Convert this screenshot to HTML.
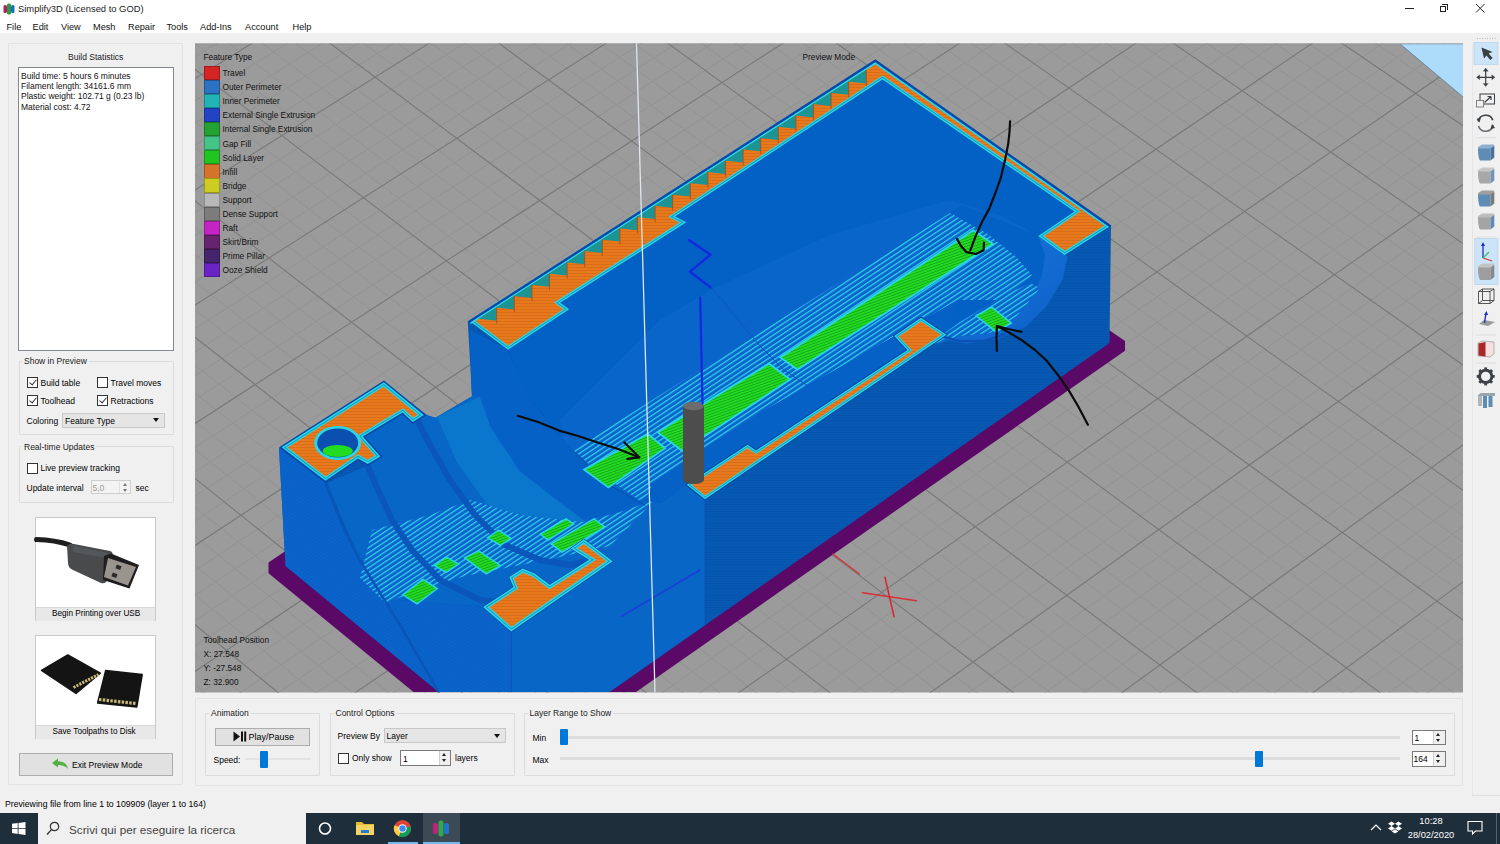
<!DOCTYPE html>
<html><head><meta charset="utf-8">
<style>
*{margin:0;padding:0;box-sizing:border-box}
html,body{width:1500px;height:844px;overflow:hidden;background:#f0f0f0;font-family:"Liberation Sans",sans-serif;color:#000}
.a{position:absolute;white-space:nowrap}
.t{font-size:8.5px;line-height:10px}
.grp{position:absolute;border:1px solid #dcdcdc;border-radius:1px}
.grpt{position:absolute;background:#f0f0f0;padding:0 2px;font-size:8.5px;line-height:10px;color:#222}
.cb{position:absolute;width:11px;height:11px;border:1px solid #333;background:#fff}
.cb.on::after{content:"";position:absolute;left:3px;top:0px;width:3px;height:6px;border:solid #333;border-width:0 1px 1px 0;transform:rotate(40deg)}
.btn{position:absolute;background:#e1e1e1;border:1px solid #adadad}
.spin{position:absolute;background:#fff;border:1px solid #7a7a7a}
.slh{position:absolute;background:#0078d7;border-radius:1px}
.trk{position:absolute;background:#dcdcdc;height:3px}
</style></head><body>
<!-- title bar -->
<div class="a" style="left:0;top:0;width:1500px;height:33px;background:#fff"></div>
<svg class="a" style="left:3px;top:3px" width="12" height="12" viewBox="0 0 12 12">
<rect x="0.5" y="2" width="3.5" height="8" rx="1.5" fill="#b01f6a"/><rect x="4" y="0.5" width="4" height="11" rx="1.5" fill="#2a9d3a"/><rect x="8" y="2" width="3.5" height="8" rx="1.5" fill="#1c6fc0"/>
</svg>
<div class="a" style="left:18px;top:3px;font-size:9.4px;line-height:12px;color:#222">Simplify3D (Licensed to GOD)</div>
<div class="a" style="left:1405px;top:8px;width:9px;height:1px;background:#222"></div>
<div class="a" style="left:1440px;top:6px;width:6px;height:6px;border:1px solid #222"></div>
<div class="a" style="left:1442px;top:4px;width:6px;height:6px;border-top:1px solid #222;border-right:1px solid #222"></div>
<svg class="a" style="left:1475px;top:3px" width="11" height="10"><path d="M1 1L9.5 9.5M9.5 1L1 9.5" stroke="#222" stroke-width="1"/></svg>
<!-- menu -->
<div class="a" style="left:0;top:21px;font-size:9.2px;line-height:12px;color:#111">
<span class="a" style="left:6.5px">File</span><span class="a" style="left:32.5px">Edit</span><span class="a" style="left:61px">View</span><span class="a" style="left:93px">Mesh</span><span class="a" style="left:128px">Repair</span><span class="a" style="left:166.5px">Tools</span><span class="a" style="left:200px">Add-Ins</span><span class="a" style="left:245px">Account</span><span class="a" style="left:292.5px">Help</span>
</div>

<!-- left panel -->
<div class="grp" style="left:8px;top:43px;width:175px;height:742px;border-color:#e3e3e3"></div>
<div class="a t" style="left:68px;top:52px;color:#222">Build Statistics</div>
<div class="a" style="left:18px;top:67px;width:156px;height:284px;background:#fff;border:1px solid #828790"></div>
<div class="a t" style="left:21px;top:71px;line-height:10.2px;color:#111">Build time: 5 hours 6 minutes<br>Filament length: 34161.6 mm<br>Plastic weight: 102.71 g (0.23 lb)<br>Material cost: 4.72</div>

<div class="grp" style="left:19px;top:361px;width:155px;height:74px"></div>
<div class="grpt" style="left:22px;top:356px">Show in Preview</div>
<div class="cb on" style="left:27px;top:377px"></div><div class="a t" style="left:40.5px;top:377.5px">Build table</div>
<div class="cb" style="left:97px;top:377px"></div><div class="a t" style="left:110.5px;top:377.5px">Travel moves</div>
<div class="cb on" style="left:27px;top:395px"></div><div class="a t" style="left:40.5px;top:395.5px">Toolhead</div>
<div class="cb on" style="left:97px;top:395px"></div><div class="a t" style="left:110.5px;top:395.5px">Retractions</div>
<div class="a t" style="left:26.5px;top:415.5px">Coloring</div>
<div class="btn" style="left:62px;top:412.5px;width:103px;height:15px;background:#e5e5e5;border-color:#c8c8c8"></div>
<div class="a t" style="left:65px;top:415.5px">Feature Type</div>
<div class="a" style="left:153px;top:418px;width:0;height:0;border-left:3.5px solid transparent;border-right:3.5px solid transparent;border-top:4px solid #111"></div>

<div class="grp" style="left:19px;top:446px;width:155px;height:57px"></div>
<div class="grpt" style="left:22px;top:441.5px">Real-time Updates</div>
<div class="cb" style="left:27px;top:462.5px"></div><div class="a t" style="left:40.5px;top:463px">Live preview tracking</div>
<div class="a t" style="left:26.5px;top:482.5px">Update interval</div>
<div class="spin" style="left:90.5px;top:480px;width:40px;height:14px;border-color:#cfcfcf;background:#f3f3f3"></div>
<div class="a t" style="left:92.5px;top:482.5px;color:#9a9a9a">5,0</div>
<div class="a" style="left:119px;top:481px;width:1px;height:12px;background:#e0e0e0"></div>
<div class="a" style="left:122.5px;top:483px;border-left:2.5px solid transparent;border-right:2.5px solid transparent;border-bottom:3px solid #777"></div>
<div class="a" style="left:122.5px;top:488.5px;border-left:2.5px solid transparent;border-right:2.5px solid transparent;border-top:3px solid #777"></div>
<div class="a t" style="left:135.5px;top:482.5px">sec</div>

<!-- USB button -->
<div class="a" style="left:35px;top:517px;width:121px;height:104px;background:#fff;border:1px solid #c9c9c9"></div>
<div class="a" style="left:36px;top:606.5px;width:119px;height:14px;background:#e8e8e8;border-top:1px solid #d8d8d8"></div>
<div class="a t" style="left:52px;top:609px;font-size:8.2px">Begin Printing over USB</div>
<svg class="a" style="left:0;top:0" width="160" height="745" viewBox="0 0 160 745">
<path d="M36.5 539.5Q55 540 70 545" stroke="#1e1e1e" stroke-width="5" fill="none" stroke-linecap="round"/>
<path d="M67 546Q69 543 74 544L110 551Q114 552 112 557L107 580Q106 584 101 583L73 570Q68 568 68 563Z" fill="#484a4c"/>
<path d="M74 546L108 553L107 558L73 552Z" fill="#5e6062" opacity="0.6"/>
<path d="M104 556L111 553.5L139 565L129.5 588.5L103 580Z" fill="#1e1e1e"/>
<path d="M108 558L136 567L128 585.5L104 577Z" fill="#9a948e"/>
<rect x="116" y="565" width="5" height="4" fill="#2a2a2a" transform="rotate(20 118 567)"/>
<rect x="112" y="573" width="5" height="4" fill="#2a2a2a" transform="rotate(20 114 575)"/>
</svg>

<!-- SD button -->
<div class="a" style="left:35px;top:635px;width:121px;height:104px;background:#fff;border:1px solid #c9c9c9"></div>
<div class="a" style="left:36px;top:724.5px;width:119px;height:14px;background:#e8e8e8;border-top:1px solid #d8d8d8"></div>
<div class="a t" style="left:52.5px;top:727px;font-size:8.2px">Save Toolpaths to Disk</div>
<svg class="a" style="left:0;top:0" width="160" height="745" viewBox="0 0 160 745">
<path d="M41.5 670.5L67.8 655L100.3 673.2L76 693.5Z" fill="#141414" stroke="#141414" stroke-width="1.5" stroke-linejoin="round"/>
<path d="M73.5 687.5L98.5 674.5" stroke="#c8b878" stroke-width="3" stroke-dasharray="2.2 1.1"/>
<path d="M105.7 670.5L142.2 674.6L136.8 707L97.6 703Z" fill="#141414" stroke="#141414" stroke-width="1.5" stroke-linejoin="round"/>
<path d="M99 699.5L136 703.5" stroke="#c8b878" stroke-width="3.2" stroke-dasharray="2.5 1.3"/>
</svg>

<!-- exit preview -->
<div class="btn" style="left:19px;top:753px;width:154px;height:23px;background:#e1e1e1;border-color:#adadad"></div>
<svg class="a" style="left:50px;top:757px" width="20" height="14" viewBox="0 0 20 14"><path d="M2 6L8 1.5V4.2C13 4.2 17 6.5 18 12C15.5 9 12.5 8 8 8V10.5Z" fill="#52b043"/></svg>
<div class="a t" style="left:72px;top:760px;font-size:8.5px">Exit Preview Mode</div>

<!-- viewport -->
<svg class="a" style="left:0;top:0" width="1500" height="844">
<defs><clipPath id="vp"><rect x="195" y="43.5" width="1268" height="649"/></clipPath></defs>
<g clip-path="url(#vp)">
<rect x="195" y="43" width="1268" height="650" fill="#9b9b9b"/>
<path d="M-1528.2 343.9L312.9 2095.5 M-1374.0 -112.9L426.7 -1070.0 M-1505.9 331.4L336.4 2076.8 M-1360.8 -101.3L440.5 -1061.2 M-1483.7 319.0L359.9 2058.1 M-1347.6 -89.7L454.4 -1052.4 M-1461.5 306.6L383.2 2039.6 M-1334.4 -78.0L468.3 -1043.6 M-1417.4 281.9L429.6 2002.7 M-1307.7 -54.6L496.2 -1025.9 M-1395.5 269.7L452.6 1984.3 M-1294.4 -42.8L510.2 -1017.1 M-1373.6 257.4L475.6 1966.1 M-1280.9 -31.0L524.2 -1008.2 M-1351.8 245.2L498.5 1947.9 M-1267.5 -19.1L538.3 -999.2 M-1308.4 221.0L544.0 1911.7 M-1240.4 4.7L566.6 -981.3 M-1286.8 208.9L566.6 1893.7 M-1226.8 16.7L580.8 -972.3 M-1265.3 196.9L589.1 1875.8 M-1213.2 28.7L595.0 -963.3 M-1243.8 184.9L611.5 1858.0 M-1199.5 40.7L609.3 -954.2 M-1201.1 161.0L656.1 1822.5 M-1172.1 64.9L637.9 -936.0 M-1179.9 149.2L678.3 1804.9 M-1158.2 77.1L652.3 -926.9 M-1158.7 137.3L700.4 1787.3 M-1144.4 89.2L666.8 -917.8 M-1137.6 125.5L722.4 1769.8 M-1130.5 101.5L681.2 -908.6 M-1095.6 102.0L766.1 1735.0 M-1102.6 126.1L710.3 -890.2 M-1074.7 90.3L787.9 1717.7 M-1088.6 138.4L724.9 -880.9 M-1053.8 78.7L809.5 1700.5 M-1074.5 150.8L739.5 -871.6 M-1033.1 67.1L831.1 1683.3 M-1060.4 163.2L754.2 -862.3 M-991.7 44.0L874.0 1649.2 M-1032.0 188.2L783.6 -843.7 M-971.1 32.4L895.3 1632.2 M-1017.8 200.8L798.4 -834.3 M-950.6 21.0L916.6 1615.3 M-1003.5 213.3L813.2 -824.9 M-930.2 9.5L937.8 1598.5 M-989.1 226.0L828.1 -815.4 M-889.5 -13.2L979.9 1565.0 M-960.3 251.4L858.0 -796.5 M-869.2 -24.5L1000.8 1548.3 M-945.8 264.1L873.0 -787.0 M-849.0 -35.8L1021.7 1531.7 M-931.3 276.9L888.0 -777.4 M-828.9 -47.1L1042.4 1515.2 M-916.7 289.7L903.1 -767.9 M-788.8 -69.5L1083.7 1482.4 M-887.4 315.5L933.4 -748.7 M-768.8 -80.6L1104.3 1466.0 M-872.7 328.5L948.6 -739.0 M-749.0 -91.8L1124.8 1449.7 M-857.9 341.5L963.8 -729.4 M-729.1 -102.8L1145.1 1433.5 M-843.1 354.6L979.1 -719.7 M-689.7 -124.9L1185.7 1401.3 M-813.3 380.8L1009.8 -700.2 M-670.0 -135.9L1205.9 1385.2 M-798.4 394.0L1025.3 -690.4 M-650.4 -146.8L1226.0 1369.3 M-783.4 407.2L1040.7 -680.6 M-630.9 -157.7L1246.0 1353.3 M-768.3 420.4L1056.2 -670.7 M-592.1 -179.5L1285.8 1321.7 M-738.0 447.1L1087.4 -651.0 M-572.7 -190.3L1305.6 1305.9 M-722.8 460.5L1103.0 -641.1 M-553.4 -201.1L1325.3 1290.2 M-707.5 473.9L1118.7 -631.1 M-534.2 -211.8L1344.9 1274.6 M-692.2 487.4L1134.5 -621.1 M-495.9 -233.2L1384.0 1243.5 M-661.4 514.5L1166.1 -601.1 M-476.9 -243.9L1403.5 1228.1 M-646.0 528.1L1181.9 -591.0 M-457.9 -254.5L1422.8 1212.7 M-630.5 541.8L1197.8 -580.9 M-439.0 -265.1L1442.1 1197.3 M-614.9 555.5L1213.8 -570.8 M-401.3 -286.1L1480.5 1166.8 M-583.6 583.1L1245.9 -550.5 M-382.5 -296.6L1499.6 1151.6 M-567.8 596.9L1262.0 -540.3 M-363.8 -307.1L1518.6 1136.5 M-552.1 610.8L1278.1 -530.0 M-345.1 -317.5L1537.6 1121.4 M-536.2 624.8L1294.3 -519.8 M-308.0 -338.3L1575.3 1091.4 M-504.4 652.8L1326.8 -499.1 M-289.5 -348.6L1594.0 1076.5 M-488.4 666.9L1343.2 -488.8 M-271.1 -358.9L1612.7 1061.6 M-472.3 681.0L1359.5 -478.4 M-252.7 -369.2L1631.3 1046.8 M-456.2 695.2L1376.0 -468.0 M-216.1 -389.6L1668.3 1017.4 M-423.8 723.8L1409.0 -447.0 M-197.9 -399.8L1686.8 1002.7 M-407.6 738.1L1425.5 -436.5 M-179.8 -410.0L1705.1 988.1 M-391.2 752.5L1442.2 -426.0 M-161.7 -420.1L1723.4 973.6 M-374.8 766.9L1458.8 -415.4 M-125.6 -440.2L1759.8 944.7 M-341.9 795.9L1492.3 -394.2 M-107.7 -450.3L1777.9 930.3 M-325.3 810.5L1509.1 -383.5 M-89.8 -460.3L1795.9 915.9 M-308.7 825.1L1526.0 -372.8 M-71.9 -470.2L1813.9 901.6 M-292.0 839.8L1542.9 -362.1 M-36.4 -490.1L1849.6 873.2 M-258.5 869.3L1576.9 -340.5 M-18.7 -500.0L1867.4 859.0 M-241.7 884.2L1594.0 -329.7 M-1.1 -509.8L1885.1 845.0 M-224.8 899.0L1611.1 -318.8 M16.5 -519.7L1902.8 830.9 M-207.8 914.0L1628.3 -307.9 M51.5 -539.2L1937.9 803.0 M-173.7 944.0L1662.8 -286.1 M68.9 -549.0L1955.4 789.1 M-156.5 959.1L1680.1 -275.1 M86.3 -558.7L1972.8 775.2 M-139.3 974.3L1697.5 -264.1 M103.6 -568.4L1990.2 761.4 M-122.1 989.5L1714.9 -253.0 M138.1 -587.7L2024.7 733.9 M-87.3 1020.1L1749.9 -230.8 M155.3 -597.3L2041.9 720.3 M-69.9 1035.4L1767.5 -219.6 M172.4 -606.9L2059.0 706.6 M-52.4 1050.9L1785.2 -208.4 M189.5 -616.4L2076.1 693.1 M-34.8 1066.3L1802.9 -197.2 M223.5 -635.4L2110.0 666.1 M0.6 1097.5L1838.4 -174.7 M240.5 -644.9L2126.9 652.6 M18.3 1113.1L1856.3 -163.3 M257.4 -654.3L2143.8 639.3 M36.2 1128.8L1874.2 -152.0 M274.2 -663.7L2160.5 625.9 M54.1 1144.6L1892.2 -140.6 M307.7 -682.5L2193.9 599.4 M90.1 1176.3L1928.3 -117.7 M324.4 -691.8L2210.5 586.2 M108.1 1192.2L1946.4 -106.2 M341.1 -701.1L2227.1 573.0 M126.3 1208.2L1964.6 -94.7 M357.7 -710.4L2243.6 559.9 M144.5 1224.2L1982.8 -83.1 M390.7 -728.9L2276.4 533.8 M181.2 1256.5L2019.5 -59.8 M407.2 -738.1L2292.7 520.8 M199.6 1272.7L2037.9 -48.2 M423.6 -747.3L2309.0 507.8 M218.1 1289.0L2056.4 -36.5 M440.0 -756.4L2325.2 494.9 M236.6 1305.3L2074.9 -24.7 M472.6 -774.6L2357.5 469.2 M274.0 1338.2L2112.1 -1.1 M488.8 -783.7L2373.6 456.5 M292.7 1354.7L2130.8 10.8 M505.0 -792.8L2389.6 443.7 M311.6 1371.3L2149.6 22.7 M521.1 -801.8L2405.5 431.0 M330.5 1388.0L2168.4 34.6 M553.3 -819.7L2437.3 405.8 M368.5 1421.4L2206.2 58.6 M569.3 -828.7L2453.1 393.2 M387.6 1438.3L2225.2 70.6 M585.2 -837.6L2468.8 380.7 M406.8 1455.2L2244.3 82.7 M601.1 -846.5L2484.5 368.2 M426.1 1472.1L2263.4 94.8 M632.8 -864.2L2515.8 343.4 M464.8 1506.2L2301.8 119.2 M648.6 -873.1L2531.3 331.0 M484.3 1523.4L2321.1 131.4 M664.4 -881.9L2546.8 318.7 M503.8 1540.6L2340.5 143.7 M680.1 -890.6L2562.3 306.4 M523.4 1557.9L2359.9 156.0 M711.3 -908.1L2593.0 281.9 M562.9 1592.6L2398.9 180.8 M726.9 -916.8L2608.3 269.8 M582.8 1610.1L2418.5 193.2 M742.4 -925.5L2623.5 257.7 M602.7 1627.7L2438.2 205.7 M757.9 -934.2L2638.7 245.6 M622.7 1645.3L2457.9 218.2 M788.8 -951.4L2669.0 221.5 M662.9 1680.7L2497.6 243.4 M804.1 -960.0L2684.0 209.5 M683.1 1698.5L2517.5 256.0 M819.4 -968.5L2699.0 197.6 M703.4 1716.4L2537.5 268.7 M834.7 -977.1L2714.0 185.7 M723.8 1734.3L2557.5 281.4 M865.1 -994.1L2743.7 162.0 M764.8 1770.5L2597.8 306.9 M880.3 -1002.6L2758.6 150.3 M785.5 1788.6L2618.1 319.8 M895.4 -1011.0L2773.3 138.5 M806.2 1806.8L2638.4 332.7 M910.5 -1019.4L2788.0 126.8 M826.9 1825.1L2658.8 345.6 M940.5 -1036.2L2817.3 103.5 M868.7 1862.0L2699.7 371.6 M955.4 -1044.6L2831.9 91.9 M889.8 1880.5L2720.3 384.6 M970.4 -1052.9L2846.4 80.3 M910.9 1899.1L2740.9 397.7 M985.2 -1061.2L2860.9 68.8 M932.1 1917.7L2761.7 410.8" stroke="#909090" stroke-width="0.8" fill="none"/>
<path d="M-1550.6 356.4L289.3 2114.2 M-1387.1 -124.5L412.9 -1078.7 M-1439.4 294.2L406.4 2021.1 M-1321.1 -66.3L482.2 -1034.8 M-1330.1 233.1L521.3 1929.7 M-1254.0 -7.2L552.4 -990.3 M-1222.5 172.9L633.9 1840.2 M-1185.8 52.8L623.6 -945.1 M-1116.6 113.8L744.3 1752.4 M-1116.6 113.8L695.7 -899.4 M-1012.4 55.5L852.6 1666.2 M-1046.2 175.7L768.9 -853.0 M-909.8 -1.9L958.9 1581.7 M-974.7 238.6L843.0 -806.0 M-808.8 -58.3L1063.1 1498.8 M-902.1 302.6L918.2 -758.3 M-709.4 -113.9L1165.5 1417.4 M-828.2 367.6L994.5 -709.9 M-611.5 -168.6L1265.9 1337.5 M-753.2 433.7L1071.8 -660.9 M-515.1 -222.5L1364.5 1259.0 M-676.9 500.9L1150.2 -611.1 M-420.1 -275.6L1461.4 1182.0 M-599.3 569.3L1229.8 -560.7 M-326.6 -327.9L1556.5 1106.4 M-520.3 638.8L1310.5 -509.5 M-234.4 -379.4L1649.9 1032.1 M-440.1 709.5L1392.4 -457.5 M-143.6 -430.2L1741.6 959.1 M-358.4 781.4L1475.6 -404.8 M-54.1 -480.2L1831.8 887.4 M-275.3 854.5L1559.9 -351.3 M34.0 -529.5L1920.4 816.9 M-190.8 929.0L1645.5 -297.0 M120.9 -578.0L2007.5 747.6 M-104.7 1004.8L1732.4 -241.9 M206.6 -625.9L2093.1 679.6 M-17.1 1081.9L1820.6 -186.0 M291.0 -673.1L2177.3 612.6 M72.0 1160.4L1910.2 -129.2 M374.2 -719.7L2260.0 546.8 M162.8 1240.3L2001.1 -71.5 M456.3 -765.5L2341.4 482.1 M255.3 1321.7L2093.5 -12.9 M537.2 -810.8L2421.4 418.4 M349.4 1404.7L2187.3 46.6 M617.0 -855.4L2500.2 355.8 M445.4 1489.2L2282.6 107.0 M695.7 -899.4L2577.6 294.1 M543.1 1575.2L2379.4 168.4 M773.4 -942.8L2653.9 233.5 M642.8 1663.0L2477.7 230.8 M850.0 -985.6L2728.9 173.9 M744.3 1752.4L2577.6 294.1 M925.5 -1027.8L2802.7 115.1 M847.8 1843.5L2679.2 358.6" stroke="#787878" stroke-width="1.1" fill="none"/>
<polygon points="1400,43.5 1463,43.5 1463,96.5" fill="#addcfa"/>
<path d="M1400 44L1463 97" stroke="#6a8aa0" stroke-width="1"/>
<line x1="195" y1="43.8" x2="1463" y2="43.8" stroke="#8a8f94" stroke-width="1"/>
<defs>
<pattern id="st" patternUnits="userSpaceOnUse" width="40" height="4.2" patternTransform="rotate(-33.5)">
<rect width="40" height="4.2" fill="#0e63cc"/><rect y="0" width="40" height="1.3" fill="#2ad0e6"/></pattern>
<pattern id="st2" patternUnits="userSpaceOnUse" width="40" height="3.4" patternTransform="rotate(-33.5)">
<rect width="40" height="3.4" fill="#0f66cf"/><rect y="0" width="40" height="1.0" fill="#24b8e0"/></pattern>
<pattern id="gs" patternUnits="userSpaceOnUse" width="40" height="2.6" patternTransform="rotate(-20)">
<rect width="40" height="2.6" fill="#22dc22"/><rect y="0" width="40" height="0.6" fill="#128a18"/></pattern>
<pattern id="lf" patternUnits="userSpaceOnUse" width="40" height="3" patternTransform="rotate(-33.5)">
<rect width="40" height="3" fill="#0964cc"/><rect y="0" width="40" height="0.8" fill="#0a5cc0"/></pattern>
<pattern id="fs" patternUnits="userSpaceOnUse" width="40" height="2.4">
<rect width="40" height="2.4" fill="#0759b4"/><rect y="0" width="40" height="0.8" fill="#0553aa"/></pattern>
<pattern id="orp" patternUnits="userSpaceOnUse" width="6" height="3">
<rect width="6" height="3" fill="#e8781c"/><rect y="0" width="6" height="0.6" fill="#d06818"/></pattern>
<linearGradient id="endw" x1="0" y1="0" x2="1" y2="1"><stop offset="0" stop-color="#1a78dc"/><stop offset="1" stop-color="#0d5fc8"/></linearGradient>
</defs>
<polygon points="284.0,552.0 268.5,562.5 268.5,573.3 413.5,692.0 636.0,692.0 1125.0,350.7 1125.0,341.0 1109.0,330.0" fill="#5a0a66" />
<polygon points="285.6,566.0 284.7,552.0 279.0,448.0 384.1,381.3 427.2,415.3 435.5,417.7 472.0,396.2 467.8,321.6 875.3,59.7 1111.0,225.5 1109.5,343.0 609.4,692.0 438.7,692.0" fill="url(#fs)" />
<polygon points="284.7,552.0 279.0,448.0 325.4,482.7 340.0,520.0 359.6,560.0 400.0,600.0 482.1,606.8 511.3,632.4 511.3,692.0 438.7,692.0 285.6,566.0" fill="url(#lf)" />
<polygon points="327.0,483.0 367.7,465.6 382.7,456.8 365.0,437.0 402.4,414.5 412.6,424.0 426.3,415.2 435.5,417.7 472.0,396.2 470.0,330.0 508.0,349.7 529.6,398.0 568.0,445.4 597.7,472.0 639.0,500.0 661.0,503.0 685.0,485.0 705.0,500.4 705.0,625.0 609.4,692.0 511.3,692.0 511.3,632.4 482.1,606.8 400.0,600.0 359.6,560.0" fill="#0766c6" />
<polygon points="472.0,396.2 470.0,330.0 508.0,349.7 533.7,402.5 559.3,433.8 599.0,479.3 644.7,505.0 615.0,525.0 582.0,519.0 559.3,502.0 519.5,470.8 491.0,428.0 479.7,396.8" fill="#0661c6" />
<polygon points="437.0,416.7 456.9,462.3 485.3,502.0 508.0,524.8 540.0,545.0 600.0,540.0 582.0,519.0 559.3,502.0 519.5,470.8 491.0,428.0 479.7,396.8" fill="#0a76cc" />
<polygon points="360.0,578.0 372.0,530.0 430.0,515.0 471.0,500.0 520.0,515.0 582.0,522.0 620.0,512.0 655.0,500.0 610.0,546.0 551.0,559.0 465.0,576.0 420.0,590.0 385.0,603.0" fill="url(#st)" />
<polyline points="325.4,483.0 340.0,520.0 359.6,560.0 400.0,625.0 438.7,692.0" fill="none" stroke="#0a55b8" stroke-width="2.5" stroke-linejoin="round" stroke-linecap="round" />
<polyline points="367.7,466.0 378.0,490.0 392.0,520.0 412.0,550.0 440.0,580.0 480.0,600.0 520.0,605.0 545.0,600.0" fill="none" stroke="#0b56ba" stroke-width="6" stroke-linejoin="round" stroke-linecap="round" />
<polyline points="416.5,419.0 430.0,445.0 450.0,480.0 475.0,515.0 505.0,545.0 540.0,560.0 570.0,565.0 600.0,558.0" fill="none" stroke="#0b56ba" stroke-width="6" stroke-linejoin="round" stroke-linecap="round" />
<polyline points="508.0,350.0 533.7,402.5 559.3,433.8 599.0,479.3 644.7,505.0" fill="none" stroke="#0852b0" stroke-width="1.2" stroke-linejoin="round" stroke-linecap="round" />
<polygon points="401.5,594.8 417.0,604.8 438.5,588.6 423.0,578.6" fill="#2ad6e6" />
<polygon points="403.9,594.7 416.9,603.1 436.1,588.7 423.1,580.3 403.9,594.7" fill="url(#gs)" />
<polygon points="433.1,565.5 446.2,573.2 460.0,564.0 446.2,556.3" fill="#2ad6e6" />
<polygon points="435.7,565.4 446.2,571.5 457.3,564.1 446.3,558.0 435.7,565.4" fill="url(#gs)" />
<polygon points="463.2,557.8 486.3,574.7 501.7,565.5 478.6,550.0" fill="#2ad6e6" />
<polygon points="465.9,558.0 486.4,573.0 499.1,565.4 478.5,551.6 465.9,558.0" fill="url(#gs)" />
<polygon points="486.3,537.8 500.2,546.2 512.5,538.5 498.6,529.3" fill="#2ad6e6" />
<polygon points="488.9,537.7 500.2,544.6 509.9,538.5 498.6,531.0 488.9,537.7" fill="url(#gs)" />
<polygon points="539.0,534.0 548.0,541.0 575.0,524.0 566.0,518.0" fill="#2ad6e6" />
<polygon points="541.5,534.2 548.1,539.3 572.4,524.0 566.0,519.7 541.5,534.2" fill="url(#gs)" />
<polygon points="550.0,544.0 562.0,553.0 606.0,527.0 594.0,518.0" fill="#2ad6e6" />
<polygon points="552.5,544.1 562.1,551.3 603.5,526.9 593.9,519.7 552.5,544.1" fill="url(#gs)" />
<polygon points="508.0,349.7 569.2,309.3 560.1,302.8 686.4,222.2 675.0,216.5 882.5,79.5 1074.5,211.5 1038.3,236.0 1064.5,254.9 1067.7,256.0 1062.5,279.5 1046.9,305.5 1026.0,326.4 997.4,339.4 966.0,343.5 948.2,334.8 920.9,316.6 892.7,335.7 906.0,349.8 756.0,449.2 747.6,443.5 685.0,485.0 661.0,503.0 639.0,500.0 597.7,472.0 568.0,445.4 529.6,398.0" fill="#0360c4" />
<clipPath id="tubclip"><polygon points="508.0,349.7 569.2,309.3 560.1,302.8 686.4,222.2 675.0,216.5 882.5,79.5 1074.5,211.5 1038.3,236.0 1064.5,254.9 1067.7,256.0 1062.5,279.5 1046.9,305.5 1026.0,326.4 997.4,339.4 966.0,343.5 948.2,334.8 920.9,316.6 892.7,335.7 906.0,349.8 756.0,449.2 747.6,443.5 685.0,485.0 661.0,503.0 639.0,500.0 597.7,472.0 568.0,445.4 529.6,398.0"/></clipPath>
<g clip-path="url(#tubclip)">
<polygon points="714.7,288.0 830.0,235.0 949.3,200.0 1000.0,215.0 1038.0,236.0 962.0,205.0 566.0,455.0 560.0,420.0 600.0,380.0 660.0,320.0" fill="#1a70d8" opacity="0.3"/>
<polygon points="560.0,457.9 950.0,213.0 987.0,233.6 1015.5,256.3 1032.0,275.0 1005.0,300.0 958.0,300.1 760.0,413.0 660.0,478.0 640.0,505.0 560.0,470.0" fill="url(#st)" />
<polygon points="661.0,503.0 650.0,485.7 760.0,413.0 958.0,300.1 948.2,334.8 920.9,316.6 892.7,335.7 906.0,349.8 756.0,449.2 747.6,443.5 685.0,485.0" fill="#0561c6" />
</g>
<polyline points="704.0,280.0 718.0,295.0 730.0,310.0 745.0,328.0 760.0,346.0 772.0,358.0 784.0,370.0 808.0,386.0" fill="none" stroke="#0a58bc" stroke-width="1.0" stroke-linejoin="round" stroke-linecap="round" />
<polygon points="582.4,469.6 608.4,488.6 666.5,448.3 647.8,432.8" fill="#2ad6e6" />
<polygon points="585.7,469.8 608.4,486.4 663.5,448.2 647.6,435.0 585.7,469.8" fill="url(#gs)" />
<polygon points="656.0,432.0 682.2,452.0 791.7,379.6 769.0,362.5" fill="#2ad6e6" />
<polygon points="659.2,432.2 682.3,449.8 788.6,379.5 768.9,364.7 659.2,432.2" fill="url(#gs)" />
<polygon points="778.7,357.3 797.3,370.7 994.7,244.0 973.3,229.3" fill="#2ad6e6" />
<polygon points="781.9,357.4 797.4,368.5 991.4,243.9 973.3,231.5 781.9,357.4" fill="url(#gs)" />
<polygon points="1038.3,236.0 1064.5,254.9 1067.7,256.0 1062.5,279.5 1046.9,305.5 1026.0,326.4 997.4,339.4 966.0,343.5 945.0,339.4 935.0,345.0 960.0,336.0 990.0,333.0 1015.0,318.0 1032.0,298.0 1042.0,275.0 1045.0,255.0" fill="url(#endw)" />
<polygon points="925.0,347.0 960.0,322.0 1000.0,298.0 1030.0,283.0 1040.0,288.0 1032.0,298.0 1015.0,318.0 990.0,333.0 960.0,336.0 940.0,342.0" fill="url(#st)" />
<polygon points="974.8,315.6 995.6,332.7 1012.7,323.2 991.8,306.2" fill="#2ad6e6" />
<polygon points="977.6,315.9 995.8,330.8 1009.9,322.9 991.6,308.1 977.6,315.9" fill="url(#gs)" />
<polyline points="940.0,336.0 960.0,341.0 985.0,341.0 1005.0,334.0" fill="none" stroke="#0a54b8" stroke-width="2.5" stroke-linejoin="round" stroke-linecap="round" />
<polygon points="468.9,320.5 875.3,59.7 1111.0,225.5 1064.5,254.9 1038.3,236.0 1074.5,211.5 882.5,79.5 675.0,216.5 686.4,222.2 560.1,302.8 569.2,309.3 508.0,349.7" fill="#2ad6e6" />
<polygon points="471.4,320.6 508.0,348.0 566.7,309.3 557.6,302.7 683.6,222.3 672.2,216.7 882.5,77.8 1077.0,211.5 1040.7,236.0 1064.6,253.2 1108.5,225.4 875.3,61.4 471.4,320.6" fill="#1590b8" />
<polygon points="472.8,320.6 508.1,347.0 565.3,309.2 556.2,302.7 681.9,222.4 670.6,216.8 882.5,76.8 1078.4,211.5 1042.1,236.1 1064.6,252.2 1107.0,225.4 875.2,62.4 472.8,320.6" fill="#2ad6e6" />
<polygon points="474.9,320.7 508.1,345.5 563.2,309.2 554.0,302.6 679.5,222.6 668.2,216.9 882.5,75.4 1080.5,211.5 1044.2,236.1 1064.6,250.8 1104.9,225.3 875.2,63.8 474.9,320.7" fill="url(#orp)" />
<polyline points="469.5,321.6 875.3,60.8 1110.0,226.0" fill="none" stroke="#0848a8" stroke-width="2.4" stroke-linejoin="round" stroke-linecap="round" stroke-linecap="butt"/>
<polyline points="471.0,323.2 875.3,63.3 1107.5,227.0" fill="none" stroke="#2ad6e6" stroke-width="1.5" stroke-linejoin="round" stroke-linecap="round" stroke-linecap="butt"/>
<clipPath id="rimclip"><polygon points="475.0,320.7 508.1,345.4 563.0,309.2 553.8,302.6 679.3,222.6 668.0,216.9 882.5,75.3 1080.7,211.5 1044.4,236.1 1064.6,250.7 1104.7,225.3 875.2,63.9 475.0,320.7"/></clipPath><g clip-path="url(#rimclip)"><polygon points="478.0,318.7 496.7,306.7 496.7,320.7" fill="#1d9494"/>
<line x1="496.7" y1="306.7" x2="496.7" y2="323.7" stroke="#a84a10" stroke-width="0.8"/>
<polygon points="495.6,307.4 514.3,295.4 514.3,309.4" fill="#1d9494"/>
<line x1="514.3" y1="295.4" x2="514.3" y2="312.4" stroke="#a84a10" stroke-width="0.8"/>
<polygon points="513.2,296.1 531.9,284.1 531.9,298.1" fill="#1d9494"/>
<line x1="531.9" y1="284.1" x2="531.9" y2="301.1" stroke="#a84a10" stroke-width="0.8"/>
<polygon points="530.8,284.8 549.5,272.8 549.5,286.8" fill="#1d9494"/>
<line x1="549.5" y1="272.8" x2="549.5" y2="289.8" stroke="#a84a10" stroke-width="0.8"/>
<polygon points="548.4,273.5 567.1,261.5 567.1,275.5" fill="#1d9494"/>
<line x1="567.1" y1="261.5" x2="567.1" y2="278.5" stroke="#a84a10" stroke-width="0.8"/>
<polygon points="566.0,262.2 584.7,250.2 584.7,264.2" fill="#1d9494"/>
<line x1="584.7" y1="250.2" x2="584.7" y2="267.2" stroke="#a84a10" stroke-width="0.8"/>
<polygon points="583.6,250.9 602.3,238.9 602.3,252.9" fill="#1d9494"/>
<line x1="602.3" y1="238.9" x2="602.3" y2="255.9" stroke="#a84a10" stroke-width="0.8"/>
<polygon points="601.2,239.6 619.9,227.6 619.9,241.6" fill="#1d9494"/>
<line x1="619.9" y1="227.6" x2="619.9" y2="244.6" stroke="#a84a10" stroke-width="0.8"/>
<polygon points="618.8,228.3 637.5,216.3 637.5,230.3" fill="#1d9494"/>
<line x1="637.5" y1="216.3" x2="637.5" y2="233.3" stroke="#a84a10" stroke-width="0.8"/>
<polygon points="636.4,217.0 655.1,205.0 655.1,219.0" fill="#1d9494"/>
<line x1="655.1" y1="205.0" x2="655.1" y2="222.0" stroke="#a84a10" stroke-width="0.8"/>
<polygon points="654.0,205.7 672.7,193.7 672.7,207.7" fill="#1d9494"/>
<line x1="672.7" y1="193.7" x2="672.7" y2="210.7" stroke="#a84a10" stroke-width="0.8"/>
<polygon points="671.6,194.4 690.3,182.4 690.3,196.4" fill="#1d9494"/>
<line x1="690.3" y1="182.4" x2="690.3" y2="199.4" stroke="#a84a10" stroke-width="0.8"/>
<polygon points="689.2,183.1 707.9,171.1 707.9,185.1" fill="#1d9494"/>
<line x1="707.9" y1="171.1" x2="707.9" y2="188.1" stroke="#a84a10" stroke-width="0.8"/>
<polygon points="706.8,171.9 725.5,159.8 725.5,173.9" fill="#1d9494"/>
<line x1="725.5" y1="159.8" x2="725.5" y2="176.8" stroke="#a84a10" stroke-width="0.8"/>
<polygon points="724.4,160.6 743.1,148.5 743.1,162.6" fill="#1d9494"/>
<line x1="743.1" y1="148.5" x2="743.1" y2="165.5" stroke="#a84a10" stroke-width="0.8"/>
<polygon points="742.0,149.3 760.7,137.2 760.7,151.3" fill="#1d9494"/>
<line x1="760.7" y1="137.2" x2="760.7" y2="154.2" stroke="#a84a10" stroke-width="0.8"/>
<polygon points="759.6,138.0 778.3,126.0 778.3,140.0" fill="#1d9494"/>
<line x1="778.3" y1="126.0" x2="778.3" y2="143.0" stroke="#a84a10" stroke-width="0.8"/>
<polygon points="777.2,126.7 795.9,114.7 795.9,128.7" fill="#1d9494"/>
<line x1="795.9" y1="114.7" x2="795.9" y2="131.7" stroke="#a84a10" stroke-width="0.8"/>
<polygon points="794.8,115.4 813.5,103.4 813.5,117.4" fill="#1d9494"/>
<line x1="813.5" y1="103.4" x2="813.5" y2="120.4" stroke="#a84a10" stroke-width="0.8"/>
<polygon points="812.4,104.1 831.1,92.1 831.1,106.1" fill="#1d9494"/>
<line x1="831.1" y1="92.1" x2="831.1" y2="109.1" stroke="#a84a10" stroke-width="0.8"/>
<polygon points="830.0,92.8 848.7,80.8 848.7,94.8" fill="#1d9494"/>
<line x1="848.7" y1="80.8" x2="848.7" y2="97.8" stroke="#a84a10" stroke-width="0.8"/>
<polygon points="847.6,81.5 866.3,69.5 866.3,83.5" fill="#1d9494"/>
<line x1="866.3" y1="69.5" x2="866.3" y2="86.5" stroke="#a84a10" stroke-width="0.8"/></g>
<polygon points="384.0,380.5 279.1,447.2 325.4,482.7 358.1,460.2 367.7,465.6 382.7,456.8 365.0,437.0 402.4,414.5 412.6,424.0 426.3,415.2" fill="#0848a8" />
<polygon points="383.9,382.3 281.7,447.3 325.4,480.8 358.0,458.4 367.7,463.9 380.4,456.4 362.7,436.6 402.6,412.6 412.8,422.1 423.8,415.1 383.9,382.3" fill="#2ad6e6" />
<polygon points="383.8,384.2 284.3,447.4 325.5,479.0 357.9,456.7 367.7,462.1 378.0,456.1 360.3,436.3 402.8,410.8 412.9,420.2 421.2,414.9 383.8,384.2" fill="#1590b8" />
<polygon points="383.7,385.2 285.7,447.5 325.5,478.0 357.9,455.7 367.7,461.2 376.8,455.9 359.1,436.1 402.9,409.8 413.0,419.2 419.9,414.8 383.7,385.2" fill="#2ad6e6" />
<polygon points="383.6,386.7 287.8,447.6 325.6,476.5 357.8,454.3 367.6,459.8 374.9,455.6 357.2,435.8 403.1,408.3 413.2,417.7 417.8,414.7 383.6,386.7" fill="url(#orp)" />
<ellipse cx="337.7" cy="443" rx="23.5" ry="17" fill="#2ad6e6"/><ellipse cx="337.7" cy="443" rx="20.5" ry="14.5" fill="#0b4fb0"/><ellipse cx="337.7" cy="451" rx="15" ry="6" fill="#22dc22"/>
<polygon points="482.1,606.8 512.7,586.9 508.4,576.9 522.6,567.7 535.4,573.3 549.7,584.0 588.0,559.8 569.6,548.4 583.8,538.5 613.7,561.3 511.3,632.4" fill="#0848a8" />
<polygon points="483.1,606.9 511.3,631.6 612.7,561.3 583.8,539.2 570.7,548.4 589.1,559.8 549.7,584.7 535.1,573.8 522.7,568.4 509.2,577.1 513.5,587.1 483.1,606.9" fill="#2ad6e6" />
<polygon points="485.7,607.1 511.5,629.6 610.0,561.2 583.7,541.2 573.6,548.3 592.1,559.8 549.6,586.7 534.3,575.2 522.8,570.2 511.2,577.7 515.5,587.7 485.7,607.1" fill="#1590b8" />
<polygon points="487.1,607.2 511.5,628.6 608.6,561.2 583.7,542.2 575.1,548.3 593.7,559.8 549.6,587.6 533.9,575.9 522.9,571.1 512.2,578.0 516.5,588.0 487.1,607.2" fill="#2ad6e6" />
<polygon points="489.4,607.3 511.6,626.8 606.2,561.1 583.7,543.9 577.6,548.2 596.3,559.8 549.5,589.3 533.2,577.1 523.0,572.7 513.9,578.6 518.2,588.6 489.4,607.3" fill="url(#orp)" />
<polygon points="685.1,484.7 747.6,443.5 756.0,449.2 906.0,349.8 892.7,335.7 920.9,316.6 948.2,334.8 705.0,500.4" fill="#0848a8" />
<polygon points="686.8,484.8 705.0,499.2 946.4,334.8 920.9,317.8 894.2,335.9 907.5,350.0 756.0,450.4 747.6,444.7 686.8,484.8" fill="#2ad6e6" />
<polygon points="689.0,484.9 705.1,497.5 944.1,334.8 920.9,319.4 896.2,336.1 909.5,350.2 756.0,452.0 747.6,446.3 689.0,484.9" fill="#1590b8" />
<polygon points="690.2,484.9 705.1,496.7 942.8,334.8 920.9,320.2 897.3,336.2 910.6,350.3 756.0,452.8 747.6,447.1 690.2,484.9" fill="#2ad6e6" />
<polygon points="691.9,485.0 705.2,495.4 941.0,334.8 920.9,321.4 898.8,336.4 912.2,350.5 756.0,454.0 747.6,448.3 691.9,485.0" fill="url(#orp)" />
<polyline points="511.3,633.0 511.3,692.0" fill="none" stroke="#0a52b4" stroke-width="0.8" stroke-linejoin="round" stroke-linecap="round" />
<polyline points="705.0,501.0 705.0,625.0" fill="none" stroke="#0a52b4" stroke-width="0.8" stroke-linejoin="round" stroke-linecap="round" />
<rect x="683" y="406" width="21" height="74.5" fill="#4d4d4d"/><ellipse cx="693.5" cy="480" rx="10.5" ry="4" fill="#4d4d4d"/><ellipse cx="693.5" cy="406" rx="10.5" ry="4.2" fill="#6c6c6c"/>
<polyline points="700.2,297.6 702.5,403.4" fill="none" stroke="#1428e0" stroke-width="2.2" stroke-linejoin="round" stroke-linecap="round" />
<polyline points="689.0,240.1 710.4,254.8 690.1,271.7 710.4,287.4" fill="none" stroke="#1428e0" stroke-width="2.4" stroke-linejoin="round" stroke-linecap="round" />
<polyline points="622.0,616.0 700.0,570.0" fill="none" stroke="#1a40d8" stroke-width="2" stroke-linejoin="round" stroke-linecap="round" />
<polyline points="636.5,43.0 655.0,692.0" fill="none" stroke="#dfe6ee" stroke-width="1.3" stroke-linejoin="round" stroke-linecap="round" />
<polyline points="832.8,553.9 859.4,574.1" fill="none" stroke="#d8303a" stroke-width="1.3" stroke-linejoin="round" stroke-linecap="round" />
<polyline points="862.6,592.8 916.5,600.8" fill="none" stroke="#d8303a" stroke-width="1.5" stroke-linejoin="round" stroke-linecap="round" />
<polyline points="885.0,577.3 894.1,616.8" fill="none" stroke="#e02030" stroke-width="1.5" stroke-linejoin="round" stroke-linecap="round" />
<polyline points="1010.1,121.4 1009.5,132.0 1008.2,144.0 1005.0,160.0 1000.7,178.2 995.0,194.0 989.3,208.6 982.0,222.0 976.0,235.1 970.3,250.3" fill="none" stroke="#0c0c0c" stroke-width="2.2" stroke-linejoin="round" stroke-linecap="round" />
<polyline points="957.0,238.9 961.0,246.0 966.5,252.2 976.0,254.0 983.6,250.3 984.0,242.7" fill="none" stroke="#0c0c0c" stroke-width="2.2" stroke-linejoin="round" stroke-linecap="round" />
<polyline points="517.8,415.8 538.0,422.0 559.2,430.6 578.0,436.0 597.7,442.5 618.0,449.0 639.2,457.3" fill="none" stroke="#0c0c0c" stroke-width="2.2" stroke-linejoin="round" stroke-linecap="round" />
<polyline points="624.4,442.5 632.0,450.0 639.2,457.3 627.3,458.8" fill="none" stroke="#0c0c0c" stroke-width="2.2" stroke-linejoin="round" stroke-linecap="round" />
<polyline points="1087.9,424.7 1078.0,406.0 1068.9,390.6 1058.0,375.0 1046.2,360.2 1035.0,350.0 1023.4,341.3 1010.0,333.0 996.9,326.1" fill="none" stroke="#0c0c0c" stroke-width="2.2" stroke-linejoin="round" stroke-linecap="round" />
<polyline points="996.9,350.8 996.5,338.0 996.9,326.1 1008.0,329.0 1021.5,331.8" fill="none" stroke="#0c0c0c" stroke-width="2.2" stroke-linejoin="round" stroke-linecap="round" />
</g>
</svg>
<div class="a" style="left:203.5px;top:52px;font-size:8.3px;line-height:10px;color:#111">Feature Type</div>
<div class="a" style="left:204px;top:65.80px;width:16px;height:14.2px;background:#d42424;border:0.5px solid rgba(0,0,0,0.25)"></div>
<div class="a" style="left:222.5px;top:68.10px;font-size:8.3px;line-height:10px;color:#111">Travel</div>
<div class="a" style="left:204px;top:79.88px;width:16px;height:14.2px;background:#2b72c2;border:0.5px solid rgba(0,0,0,0.25)"></div>
<div class="a" style="left:222.5px;top:82.18px;font-size:8.3px;line-height:10px;color:#111">Outer Perimeter</div>
<div class="a" style="left:204px;top:93.96px;width:16px;height:14.2px;background:#22b4b4;border:0.5px solid rgba(0,0,0,0.25)"></div>
<div class="a" style="left:222.5px;top:96.26px;font-size:8.3px;line-height:10px;color:#111">Inner Perimeter</div>
<div class="a" style="left:204px;top:108.04px;width:16px;height:14.2px;background:#2244c4;border:0.5px solid rgba(0,0,0,0.25)"></div>
<div class="a" style="left:222.5px;top:110.34px;font-size:8.3px;line-height:10px;color:#111">External Single Extrusion</div>
<div class="a" style="left:204px;top:122.12px;width:16px;height:14.2px;background:#22a232;border:0.5px solid rgba(0,0,0,0.25)"></div>
<div class="a" style="left:222.5px;top:124.42px;font-size:8.3px;line-height:10px;color:#111">Internal Single Extrusion</div>
<div class="a" style="left:204px;top:136.20px;width:16px;height:14.2px;background:#44c488;border:0.5px solid rgba(0,0,0,0.25)"></div>
<div class="a" style="left:222.5px;top:138.50px;font-size:8.3px;line-height:10px;color:#111">Gap Fill</div>
<div class="a" style="left:204px;top:150.28px;width:16px;height:14.2px;background:#22c422;border:0.5px solid rgba(0,0,0,0.25)"></div>
<div class="a" style="left:222.5px;top:152.58px;font-size:8.3px;line-height:10px;color:#111">Solid Layer</div>
<div class="a" style="left:204px;top:164.36px;width:16px;height:14.2px;background:#d4742a;border:0.5px solid rgba(0,0,0,0.25)"></div>
<div class="a" style="left:222.5px;top:166.66px;font-size:8.3px;line-height:10px;color:#111">Infill</div>
<div class="a" style="left:204px;top:178.44px;width:16px;height:14.2px;background:#cccc22;border:0.5px solid rgba(0,0,0,0.25)"></div>
<div class="a" style="left:222.5px;top:180.74px;font-size:8.3px;line-height:10px;color:#111">Bridge</div>
<div class="a" style="left:204px;top:192.52px;width:16px;height:14.2px;background:#b8b8b8;border:0.5px solid rgba(0,0,0,0.25)"></div>
<div class="a" style="left:222.5px;top:194.82px;font-size:8.3px;line-height:10px;color:#111">Support</div>
<div class="a" style="left:204px;top:206.60px;width:16px;height:14.2px;background:#7c7c7c;border:0.5px solid rgba(0,0,0,0.25)"></div>
<div class="a" style="left:222.5px;top:208.90px;font-size:8.3px;line-height:10px;color:#111">Dense Support</div>
<div class="a" style="left:204px;top:220.68px;width:16px;height:14.2px;background:#c424c4;border:0.5px solid rgba(0,0,0,0.25)"></div>
<div class="a" style="left:222.5px;top:222.98px;font-size:8.3px;line-height:10px;color:#111">Raft</div>
<div class="a" style="left:204px;top:234.76px;width:16px;height:14.2px;background:#66246e;border:0.5px solid rgba(0,0,0,0.25)"></div>
<div class="a" style="left:222.5px;top:237.06px;font-size:8.3px;line-height:10px;color:#111">Skirt/Brim</div>
<div class="a" style="left:204px;top:248.84px;width:16px;height:14.2px;background:#44246a;border:0.5px solid rgba(0,0,0,0.25)"></div>
<div class="a" style="left:222.5px;top:251.14px;font-size:8.3px;line-height:10px;color:#111">Prime Pillar</div>
<div class="a" style="left:204px;top:262.92px;width:16px;height:14.2px;background:#6a24c6;border:0.5px solid rgba(0,0,0,0.25)"></div>
<div class="a" style="left:222.5px;top:265.22px;font-size:8.3px;line-height:10px;color:#111">Ooze Shield</div>
<div class="a" style="left:802.5px;top:52px;font-size:8.3px;line-height:10px;color:#111">Preview Mode</div>
<div class="a" style="left:203.5px;top:633px;font-size:8.3px;line-height:14px;color:#111">Toolhead Position<br>X: 27.548<br>Y: -27.548<br>Z: 32.900</div>

<!-- bottom panel -->
<div class="grp" style="left:195px;top:697.5px;width:1268px;height:88px;border-color:#e3e3e3"></div>
<div class="grp" style="left:205px;top:713px;width:115px;height:63px"></div>
<div class="grpt" style="left:209px;top:708px">Animation</div>
<div class="btn" style="left:215px;top:728px;width:95px;height:17.5px"></div>
<svg class="a" style="left:233px;top:731px" width="14" height="11"><path d="M0.5 0.5L7 5.5L0.5 10.5Z" fill="#111"/><rect x="8" y="0.5" width="2" height="10" fill="#111"/><rect x="11.2" y="0.5" width="2" height="10" fill="#111"/></svg>
<div class="a t" style="left:248.5px;top:732px;font-size:9px">Play/Pause</div>
<div class="a t" style="left:213.5px;top:755px">Speed:</div>
<div class="trk" style="left:245px;top:758px;width:66px;height:2px;background:#e3e3e3"></div>
<div class="slh" style="left:260px;top:751px;width:8px;height:17px"></div>

<div class="grp" style="left:329.5px;top:713px;width:185px;height:63px"></div>
<div class="grpt" style="left:333.5px;top:708px">Control Options</div>
<div class="a t" style="left:337.5px;top:731px">Preview By</div>
<div class="btn" style="left:384px;top:727.5px;width:121.5px;height:15.5px;background:#e5e5e5;border-color:#c8c8c8"></div>
<div class="a t" style="left:386.5px;top:731px">Layer</div>
<div class="a" style="left:494px;top:733.5px;border-left:3.5px solid transparent;border-right:3.5px solid transparent;border-top:4px solid #111"></div>
<div class="cb" style="left:338px;top:752.5px"></div><div class="a t" style="left:352px;top:753px">Only show</div>
<div class="spin" style="left:400px;top:750px;width:51px;height:16px"></div>
<div class="a t" style="left:403px;top:753.5px">1</div>
<div class="a" style="left:438.5px;top:751px;width:11px;height:14px;background:#efefef;border-left:1px solid #cfcfcf"></div>
<div class="a" style="left:441.5px;top:753px;border-left:2.5px solid transparent;border-right:2.5px solid transparent;border-bottom:3px solid #222"></div>
<div class="a" style="left:441.5px;top:759px;border-left:2.5px solid transparent;border-right:2.5px solid transparent;border-top:3px solid #222"></div>
<div class="a t" style="left:455px;top:753px">layers</div>

<div class="grp" style="left:523.5px;top:713px;width:931px;height:63px"></div>
<div class="grpt" style="left:527.5px;top:708px">Layer Range to Show</div>
<div class="a t" style="left:532.5px;top:732.5px">Min</div>
<div class="a t" style="left:532.5px;top:754.5px">Max</div>
<div class="trk" style="left:560px;top:735.5px;width:840px"></div>
<div class="trk" style="left:560px;top:757px;width:840px"></div>
<div class="slh" style="left:560px;top:728.5px;width:8px;height:16px"></div>
<div class="slh" style="left:1255px;top:750.5px;width:8px;height:16.5px"></div>
<div class="spin" style="left:1412px;top:729.5px;width:33.5px;height:15.5px"></div>
<div class="a t" style="left:1414.5px;top:732.5px">1</div>
<div class="spin" style="left:1412px;top:751px;width:33.5px;height:16px"></div>
<div class="a t" style="left:1413.5px;top:754px">164</div>
<div class="a" style="left:1432.5px;top:730.5px;width:12px;height:13.5px;background:#efefef;border-left:1px solid #cfcfcf"></div>
<div class="a" style="left:1432.5px;top:752px;width:12px;height:14px;background:#efefef;border-left:1px solid #cfcfcf"></div>
<div class="a" style="left:1436px;top:732.5px;border-left:2.5px solid transparent;border-right:2.5px solid transparent;border-bottom:3px solid #222"></div>
<div class="a" style="left:1436px;top:738.5px;border-left:2.5px solid transparent;border-right:2.5px solid transparent;border-top:3px solid #222"></div>
<div class="a" style="left:1436px;top:754px;border-left:2.5px solid transparent;border-right:2.5px solid transparent;border-bottom:3px solid #222"></div>
<div class="a" style="left:1436px;top:760px;border-left:2.5px solid transparent;border-right:2.5px solid transparent;border-top:3px solid #222"></div>

<!-- right toolbar -->
<div class="a" style="left:1472px;top:43px;width:1px;height:752px;background:#e6e6e6"></div>
<div class="a" style="left:1472px;top:795px;width:28px;height:1px;background:#e0e0e0"></div>
<svg class="a" style="left:1465px;top:36px" width="35" height="380" viewBox="1465 36 35 380">
<path d="M1477 38.5H1497" stroke="#b8b8b8" stroke-width="1" stroke-dasharray="1 1.5"/>
<rect x="1474" y="42.5" width="24" height="22" fill="#cce4f7" stroke="#a8cdee" stroke-width="0.6"/>
<path d="M1481.5 47.5L1492.5 52L1488.6 53.4L1492.6 58L1490.3 60L1486.5 55.4L1484 58.5Z" fill="#3a3f44"/>
<g fill="#3a3f44" stroke="#3a3f44">
<path d="M1478 77.3H1493.5M1485.7 69.5V85" stroke-width="1.2"/>
<path d="M1485.7 68L1483.2 71.2H1488.2Z M1485.7 86.6L1483.2 83.4H1488.2Z M1476.5 77.3L1479.7 74.8V79.8Z M1495 77.3L1491.8 74.8V79.8Z" stroke-width="0.3"/>
</g>
<rect x="1480" y="94" width="14.5" height="10" fill="none" stroke="#3a3f44" stroke-width="1"/>
<rect x="1476.5" y="100.5" width="7" height="6.5" fill="#f0f0f0" stroke="#777" stroke-width="0.9"/>
<path d="M1484.5 102.5L1491 96.5M1491 96.5H1487.5M1491 96.5V100" stroke="#3a3f44" stroke-width="1.2" fill="none"/>
<path d="M1478.2 121.5A7.6 7.6 0 0 1 1492.8 120.2" fill="none" stroke="#3a3f44" stroke-width="1.6"/>
<path d="M1493.2 125A7.6 7.6 0 0 1 1478.5 126" fill="none" stroke="#6a6f74" stroke-width="1.6"/>
<path d="M1476.5 119L1481 117.5L1479.5 122.5Z M1495 128L1490.5 129L1492 124Z" fill="#3a3f44"/>
<path d="M1476 137.8H1496" stroke="#dcdcdc" stroke-width="1"/>
<!-- cubes -->
<g>
<path d="M1478 147L1482 144.5H1494L1494.3 146.5L1490.5 149H1478Z" fill="#8fb0cc"/>
<path d="M1478 148.5H1490.5V160.5H1480Q1478 158 1478 148.5Z" fill="#5f8cb4"/>
<path d="M1490.5 148.5L1494.3 146V157.5L1490.5 160.5Z" fill="#4a7399"/>
</g>
<g>
<path d="M1478 170L1482 167.5H1494L1494.3 169.5L1490.5 172H1478Z" fill="#c8c8c8"/>
<path d="M1478 171.5H1490.5V183.5H1480Q1478 181 1478 171.5Z" fill="#a8a8a8"/>
<path d="M1490.5 171.5L1494.3 169V180.5L1490.5 183.5Z" fill="#6f94b8"/>
</g>
<g>
<path d="M1478 193L1482 190.5H1494L1494.3 192.5L1490.5 195H1478Z" fill="#a0a0a0"/>
<path d="M1478 194.5H1490.5V206.5H1480Q1478 204 1478 194.5Z" fill="#5f8cb4"/>
<path d="M1490.5 194.5L1494.3 192V203.5L1490.5 206.5Z" fill="#7a7a7a"/>
</g>
<g>
<path d="M1478 216L1482 213.5H1494L1494.3 215.5L1490.5 218H1478Z" fill="#bdbdbd"/>
<path d="M1478 217.5H1490.5V229.5H1480Q1478 227 1478 217.5Z" fill="#a4a4a4"/>
<path d="M1490.5 217.5L1494.3 215V226.5L1490.5 229.5Z" fill="#5f8cb4"/>
</g>
<path d="M1476 237H1496" stroke="#dcdcdc" stroke-width="1"/>
<rect x="1474.8" y="238.6" width="23.2" height="46" fill="#cce4f7" stroke="#a8cdee" stroke-width="0.6"/>
<path d="M1483 258V244" stroke="#1a2ec8" stroke-width="1.3"/><path d="M1483 242L1481 246H1485Z" fill="#1a2ec8"/>
<path d="M1483 258L1492 261" stroke="#e03030" stroke-width="1.3"/>
<path d="M1483 258L1489 252" stroke="#30c060" stroke-width="1.3"/>
<g>
<path d="M1478 266L1482 263.5H1494L1494.3 265.5L1490.5 268H1478Z" fill="#c4c4c4"/>
<path d="M1478 267.5H1490.5V280H1480Q1478 277 1478 267.5Z" fill="#9e9e9e"/>
<path d="M1490.5 267.5L1494.3 265V277L1490.5 280Z" fill="#888"/>
</g>
<path d="M1478.5 291.5L1482.5 289H1494V300.5L1490 303.5H1478.5Z M1478.5 291.5H1490V303.5 M1490 291.5L1494 289 M1482.5 289V300.5H1494 M1482.5 300.5L1478.5 303.5" fill="none" stroke="#444" stroke-width="0.9"/>
<path d="M1479 324L1484 320L1495 322L1488 326Z" fill="#9a9a9a"/>
<path d="M1484.5 323L1486 313" stroke="#1a2ec8" stroke-width="1.4"/><path d="M1486.5 311L1484 315H1488Z" fill="#1a2ec8"/>
<path d="M1476 335H1496" stroke="#dcdcdc" stroke-width="1"/>
<path d="M1478 343L1482 341L1494 342V354L1490 357L1478 356Z" fill="#f4e0e0" stroke="#999" stroke-width="0.7"/>
<path d="M1478.5 343.5L1485.5 342V356.5L1478.5 355.5Z" fill="#a82828"/>
<path d="M1476 363H1496" stroke="#dcdcdc" stroke-width="1"/>
<g transform="translate(1485.7 376.4)">
<circle r="6.2" fill="none" stroke="#3e4246" stroke-width="3"/>
<path d="M-1.4 -9H1.4V-6H-1.4Z" fill="#3e4246" transform="rotate(0)"/><path d="M-1.4 -9H1.4V-6H-1.4Z" fill="#3e4246" transform="rotate(45)"/><path d="M-1.4 -9H1.4V-6H-1.4Z" fill="#3e4246" transform="rotate(90)"/><path d="M-1.4 -9H1.4V-6H-1.4Z" fill="#3e4246" transform="rotate(135)"/><path d="M-1.4 -9H1.4V-6H-1.4Z" fill="#3e4246" transform="rotate(180)"/><path d="M-1.4 -9H1.4V-6H-1.4Z" fill="#3e4246" transform="rotate(225)"/><path d="M-1.4 -9H1.4V-6H-1.4Z" fill="#3e4246" transform="rotate(270)"/><path d="M-1.4 -9H1.4V-6H-1.4Z" fill="#3e4246" transform="rotate(315)"/>
</g>
<path d="M1478 395L1481 393H1495V396H1478Z" fill="#9aa4ac"/>
<rect x="1478" y="396" width="4" height="10" fill="#b0b6bc"/>
<rect x="1483" y="396" width="4" height="12" fill="#5f8cb4"/>
<rect x="1488.5" y="396" width="4" height="11" fill="#5f8cb4"/>
</svg>


<!-- status bar -->
<div class="a t" style="left:5px;top:799px;font-size:8.7px">Previewing file from line 1 to 109909 (layer 1 to 164)</div>

<!-- taskbar -->
<div class="a" style="left:0;top:813px;width:1500px;height:31px;background:#1f2e3b"></div>
<div class="a" style="left:37.5px;top:813px;width:268px;height:31px;background:#f0f0f0"></div>
<svg class="a" style="left:12px;top:822px" width="14" height="13" viewBox="0 0 14 13"><path d="M0 1.8L5.7 1V6H0Z M6.5 0.9L13.5 0V6H6.5Z M0 6.8H5.7V11.9L0 11.1Z M6.5 6.8H13.5V13L6.5 12Z" fill="#fff"/></svg>
<svg class="a" style="left:46px;top:821px" width="14" height="15" viewBox="0 0 14 15"><circle cx="8.5" cy="5.5" r="4.2" fill="none" stroke="#333" stroke-width="1.2"/><path d="M5.5 8.6L1 13.5" stroke="#333" stroke-width="1.4"/></svg>
<div class="a" style="left:69px;top:821.5px;font-size:11.7px;line-height:15px;color:#444">Scrivi qui per eseguire la ricerca</div>
<svg class="a" style="left:317px;top:821px" width="16" height="15"><circle cx="8" cy="7.5" r="5.5" fill="none" stroke="#fff" stroke-width="1.6"/></svg>
<svg class="a" style="left:355px;top:820px" width="20" height="16" viewBox="0 0 20 16"><path d="M1 2H7L9 4H19V15H1Z" fill="#e8b92a"/><rect x="1" y="5" width="18" height="10" fill="#f6d365"/><rect x="6" y="10" width="8" height="3" fill="#2a7ad0"/></svg>
<svg class="a" style="left:393px;top:819px" width="19" height="19" viewBox="0 0 20 20"><circle cx="10" cy="10" r="9" fill="#db4437"/><path d="M10 10 L18.6 7.5 A9 9 0 0 1 6 18.1Z" fill="#0f9d58"/><path d="M10 10 L6 18.1 A9 9 0 0 1 1.6 6.5Z" fill="#ffcd40"/><circle cx="10" cy="10" r="4.4" fill="#fff"/><circle cx="10" cy="10" r="3.4" fill="#4285f4"/></svg>
<div class="a" style="left:388px;top:842px;width:30px;height:2px;background:#76b9ed"></div>
<div class="a" style="left:423px;top:813px;width:37px;height:31px;background:#3c4a56"></div>
<div class="a" style="left:423px;top:842px;width:37px;height:2px;background:#76b9ed"></div>
<svg class="a" style="left:432px;top:820px" width="18" height="17" viewBox="0 0 18 17"><rect x="1" y="3" width="5" height="11" rx="2" fill="#c0217a"/><rect x="6.5" y="0.5" width="5" height="16" rx="2" fill="#2fa84f"/><rect x="12" y="3" width="5" height="11" rx="2" fill="#1f73c9"/></svg>
<svg class="a" style="left:1370px;top:823px" width="12" height="8"><path d="M1 7L6 2L11 7" fill="none" stroke="#fff" stroke-width="1.2"/></svg>
<svg class="a" style="left:1388px;top:821px" width="14" height="13" viewBox="0 0 14 13"><path d="M3.5 0.5L7 2.8L3.5 5.1L0 2.8Z M10.5 0.5L14 2.8L10.5 5.1L7 2.8Z M3.5 5.1L7 7.4L3.5 9.7L0 7.4Z M10.5 5.1L14 7.4L10.5 9.7L7 7.4Z M7 8.3L10.3 10.4L7 12.5L3.7 10.4Z" fill="#fff"/></svg>
<div class="a" style="left:1410px;top:815.5px;width:42px;text-align:center;font-size:9.3px;line-height:11px;color:#fff">10:28</div>
<div class="a" style="left:1405px;top:829.5px;width:52px;text-align:center;font-size:9.3px;line-height:11px;color:#fff">28/02/2020</div>
<svg class="a" style="left:1467px;top:820px" width="16" height="16" viewBox="0 0 16 16"><path d="M1 1.5H15V11H8.5L5.5 14V11H1Z" fill="none" stroke="#fff" stroke-width="1.1"/></svg>
<div class="a" style="left:1496px;top:813px;width:1px;height:31px;background:#56636e"></div>

</body></html>
